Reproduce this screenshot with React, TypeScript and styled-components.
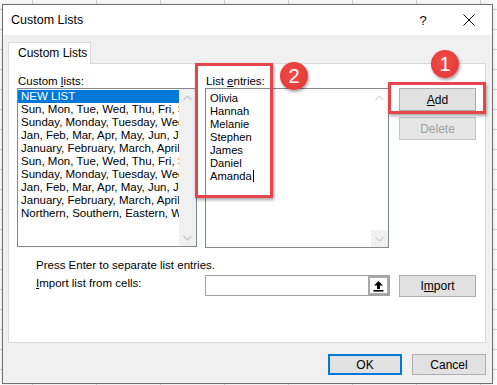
import React from 'react';
import styled, { createGlobalStyle } from 'styled-components';

const GlobalStyle = createGlobalStyle`
  html, body {
    margin: 0;
    padding: 0;
  }
  body {
    height: 385px;
    overflow: hidden;
    background-color: #ffffff;
    background-image:
      linear-gradient(to right, #d4d4d4 1px, transparent 1px),
      linear-gradient(to bottom, #d4d4d4 1px, transparent 1px);
    background-size: 64px 100%, 100% 20px;
    background-position: 32px 0, 0 9px;
    font-family: "Liberation Sans", Arial, sans-serif;
    font-size: 11.5px;
    color: #000;
  }
`;

const Dialog = styled.div`
  position: relative;
  box-sizing: border-box;
  width: 491px;
  height: 380px;
  margin: 4px 0 0 2px;
  border: 1px solid #6f6f6f;
  background: #f0f0f0;
  display: flex;
  flex-direction: column;
  box-shadow: 0 0 6px rgba(0, 0, 0, 0.15);
`;

const TitleBar = styled.div`
  height: 30px;
  background: #fff;
  display: flex;
  align-items: center;
  padding-left: 8px;
`;

const Title = styled.div`
  flex: 1;
  font-size: 12.5px;
`;

const TitleButton = styled.div`
  width: 46px;
  height: 30px;
  display: flex;
  align-items: center;
  justify-content: center;
  font-size: 13px;
`;

const Body = styled.div`
  flex: 1;
  padding: 7px 6px 0 5px;
  display: flex;
  flex-direction: column;
`;

const TabStrip = styled.div`
  display: flex;
  height: 21px;
`;

const Tab = styled.div`
  box-sizing: border-box;
  width: 83px;
  height: 22px;
  background: #fff;
  border: 1px solid #d9d9d9;
  border-bottom: none;
  padding-left: 9px;
  line-height: 20px;
  font-size: 12px;
  position: relative;
  z-index: 1;
`;

const Panel = styled.div`
  box-sizing: border-box;
  height: 280px;
  background: #fff;
  border: 1px solid #d9d9d9;
  padding: 11px 0 0 8px;
`;

const Grid = styled.div`
  display: grid;
  grid-template-columns: 180px 184px 77px;
  column-gap: 8px;
  align-items: start;
`;

const Label = styled.div<{ $indent?: number }>`
  line-height: 13px;
  height: 13px;
  padding-left: ${p => p.$indent ?? 1}px;
  white-space: nowrap;
`;

const Box = styled.div<{ $h: number }>`
  box-sizing: border-box;
  height: ${p => p.$h}px;
  border: 1px solid #828790;
  background: #fff;
  display: flex;
  overflow: hidden;
`;

const Rows = styled.div`
  flex: 1;
  padding: 1px 0 0 0;
  overflow: hidden;
`;

const Row = styled.div<{ $selected?: boolean; $pad?: number }>`
  height: 13px;
  line-height: 13px;
  padding-left: ${p => p.$pad ?? 3}px;
  white-space: nowrap;
  overflow: hidden;
  background: ${p => (p.$selected ? '#0078d7' : 'transparent')};
  color: ${p => (p.$selected ? '#fff' : '#000')};
`;

const Entries = styled.div`
  flex: 1;
  padding: 3px 0 0 4px;
  font-size: 11.2px;
`;

const Caret = styled.span`
  display: inline-block;
  width: 1px;
  height: 12px;
  background: #000;
  vertical-align: -2px;
  margin-left: 1px;
`;

const Scrollbar = styled.div<{ $track: string }>`
  width: 17px;
  background: ${p => p.$track};
  display: flex;
  flex-direction: column;
  justify-content: space-between;
`;

const ScrollArrow = styled.div<{ $bg: string }>`
  height: 17px;
  background: ${p => p.$bg};
  display: flex;
  align-items: center;
  justify-content: center;
`;

const ButtonCol = styled.div`
  margin-left: 2px;
  display: flex;
  flex-direction: column;
  gap: 6px;
`;

const Button = styled.div<{ $w?: number; $h?: number; $disabled?: boolean; $default?: boolean }>`
  box-sizing: border-box;
  width: ${p => p.$w ?? 77}px;
  height: ${p => p.$h ?? 23}px;
  background: ${p => (p.$disabled ? '#e6e6e6' : '#e1e1e1')};
  border: ${p => (p.$default ? '2px solid #0078d7' : p.$disabled ? '1px solid #c4c4c4' : '1px solid #adadad')};
  color: ${p => (p.$disabled ? '#a0a0a0' : '#000')};
  display: flex;
  align-items: center;
  justify-content: center;
  font-size: 12px;
`;

const Note = styled.div`
  margin: 11px 0 0 19px;
  line-height: 13px;
`;

const ImportRow = styled(Grid)`
  margin-top: 3px;
`;

const ImportLabel = styled.div`
  padding: 2px 0 0 19px;
  line-height: 13px;
`;

const RefInput = styled.div`
  box-sizing: border-box;
  width: 185px;
  height: 21px;
  border: 1px solid #a0a0a0;
  background: #fff;
  display: flex;
  justify-content: flex-end;
`;

const RefButton = styled.div`
  box-sizing: border-box;
  width: 21px;
  height: 19px;
  border: 2px solid #a8a8a8;
  background: #fff;
  display: flex;
  align-items: center;
  justify-content: center;
`;

const Footer = styled.div`
  display: flex;
  justify-content: flex-end;
  gap: 10px;
  margin-top: 11px;
`;

const U = styled.span`
  text-decoration: underline;
  text-underline-offset: 1px;
`;

const Highlight = styled.div<{ $x: number; $y: number; $w: number; $h: number }>`
  position: absolute;
  box-sizing: border-box;
  left: ${p => p.$x}px;
  top: ${p => p.$y}px;
  width: ${p => p.$w}px;
  height: ${p => p.$h}px;
  border: 3px solid #e8444c;
  box-shadow: 1px 2px 3px rgba(0, 0, 0, 0.35), inset 0 0 1px rgba(0, 0, 0, 0.1);
  pointer-events: none;
`;

const Badge = styled.div<{ $x: number; $y: number }>`
  position: absolute;
  left: ${p => p.$x}px;
  top: ${p => p.$y}px;
  width: 28px;
  height: 28px;
  border-radius: 50%;
  box-sizing: border-box;
  background: radial-gradient(circle at 45% 40%, #f04a48 0%, #e63c3c 70%, #c52d2f 100%);
  box-shadow: 1px 2px 3px rgba(0, 0, 0, 0.35);
  color: #fff;
  font-family: "Liberation Sans", Arial, sans-serif;
  font-size: 20px;
  line-height: 28px;
  text-align: center;
`;

const Chevron = ({ up, color }: { up?: boolean; color: string }) => (
  <svg width="9" height="6" viewBox="0 0 9 6">
    <path d={up ? 'M0.5 5 L4.5 1 L8.5 5' : 'M0.5 1 L4.5 5 L8.5 1'} fill="none" stroke={color} strokeWidth="1.1" />
  </svg>
);

const CloseIcon = () => (
  <svg width="12" height="12" viewBox="0 0 12 12">
    <path d="M0.5 0.5 L11.5 11.5 M11.5 0.5 L0.5 11.5" stroke="#000" strokeWidth="1" />
  </svg>
);

const UploadIcon = () => (
  <svg width="11" height="12" viewBox="0 0 11 12">
    <path d="M5.5 1 L1 5.5 L4 5.5 L4 9 L7 9 L7 5.5 L10 5.5 Z" fill="#000" />
    <rect x="0.5" y="10" width="10" height="1.6" fill="#000" />
  </svg>
);

const customLists = [
  'Sun, Mon, Tue, Wed, Thu, Fri, Sat',
  'Sunday, Monday, Tuesday, Wednesday',
  'Jan, Feb, Mar, Apr, May, Jun, Jul',
  'January, February, March, April',
  'Sun, Mon, Tue, Wed, Thu, Fri, Sat',
  'Sunday, Monday, Tuesday, Wednesday',
  'Jan, Feb, Mar, Apr, May, Jun, Jul',
  'January, February, March, April',
  'Northern, Southern, Eastern, Western',
];

const entries = ['Olivia', 'Hannah', 'Melanie', 'Stephen', 'James', 'Daniel', 'Amanda'];

export default function App() {
  return (
    <>
      <GlobalStyle />
      <Dialog>
        <TitleBar>
          <Title>Custom Lists</Title>
          <TitleButton>?</TitleButton>
          <TitleButton>
            <CloseIcon />
          </TitleButton>
        </TitleBar>
        <Body>
          <TabStrip>
            <Tab>Custom Lists</Tab>
          </TabStrip>
          <Panel>
            <Grid>
              <Label>
                Custom <U>l</U>ists:
              </Label>
              <Label $indent={1}>
                List <U>e</U>ntries:
              </Label>
              <div />
              <Box $h={159}>
                <Rows>
                  <Row $selected>NEW LIST</Row>
                  {customLists.map((l, i) => (
                    <Row key={i}>{l}</Row>
                  ))}
                </Rows>
                <Scrollbar $track="#f0f0f0">
                  <ScrollArrow $bg="#f0f0f0">
                    <Chevron up color="#c2c2c2" />
                  </ScrollArrow>
                  <ScrollArrow $bg="#f0f0f0">
                    <Chevron color="#c2c2c2" />
                  </ScrollArrow>
                </Scrollbar>
              </Box>
              <Box $h={160}>
                <Entries>
                  {entries.map((e, i) => (
                    <Row key={i} $pad={0}>
                      {e}
                      {i === entries.length - 1 && <Caret />}
                    </Row>
                  ))}
                </Entries>
                <Scrollbar $track="#fff">
                  <ScrollArrow $bg="#fff">
                    <Chevron up color="#d6d6d6" />
                  </ScrollArrow>
                  <ScrollArrow $bg="#f0f0f0">
                    <Chevron color="#d0d0d0" />
                  </ScrollArrow>
                </Scrollbar>
              </Box>
              <ButtonCol>
                <Button>
                  <U>A</U>dd
                </Button>
                <Button $disabled>Delete</Button>
              </ButtonCol>
            </Grid>
            <Note>Press Enter to separate list entries.</Note>
            <ImportRow>
              <ImportLabel>
                <U>I</U>mport list from cells:
              </ImportLabel>
              <RefInput>
                <RefButton>
                  <UploadIcon />
                </RefButton>
              </RefInput>
              <ButtonCol>
                <Button $h={22}>
                  I<U>m</U>port
                </Button>
              </ButtonCol>
            </ImportRow>
          </Panel>
          <Footer>
            <Button $w={74} $h={21} $default>
              OK
            </Button>
            <Button $w={74} $h={21}>
              Cancel
            </Button>
          </Footer>
        </Body>
        <Highlight $x={192} $y={58} $w={78} $h={135} />
        <Highlight $x={385} $y={77} $w={98} $h={32} />
        <Badge $x={277} $y={57}>2</Badge>
        <Badge $x={428} $y={45}>1</Badge>
      </Dialog>
    </>
  );
}
